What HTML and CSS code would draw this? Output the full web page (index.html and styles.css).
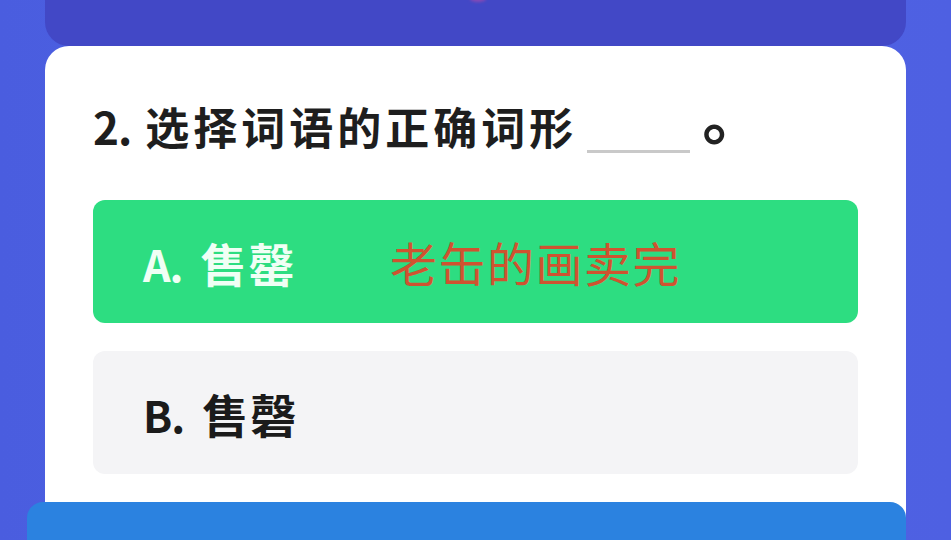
FILE: index.html
```html
<!DOCTYPE html>
<html lang="zh">
<head>
<meta charset="utf-8">
<link rel="stylesheet" href="styles.css">
</head>
<body>
<div class="page">
  <div class="topband"><span class="glow"></span></div>
  <div class="card">
    <div class="question"><span class="num">2.</span><span class="qtext">选择词语的正确词形</span><span class="blank"></span><span class="stop">。</span></div>
    <div class="option correct">
      <span class="label"><span class="letter">A.</span>售罄</span>
      <span class="note">老缶的画卖完</span>
    </div>
    <div class="option">
      <span class="label"><span class="letter">B.</span>售磬</span>
    </div>
  </div>
  <div class="bottombar"></div>
</div>
</body>
</html>
```

FILE: styles.css
```css
html, body {
  margin: 0;
  padding: 0;
  width: 951px;
  height: 540px;
  overflow: hidden;
}
body {
  background: linear-gradient(90deg, #4a5ddf 0%, #4f64e4 50%, #4e60e2 100%);
  font-family: "Noto Sans CJK SC", "Noto Sans", sans-serif;
}
.page {
  position: relative;
  width: 951px;
  height: 540px;
  padding: 0 45px;
  box-sizing: border-box;
}
.topband {
  position: relative;
  height: 46px;
  background: #4248c6;
  border-radius: 0 0 24px 24px;
}
.glow {
  position: absolute;
  left: 425px;
  top: -4px;
  width: 16px;
  height: 6px;
  border-radius: 50%;
  background: #9a4ab0;
  opacity: 0.8;
  filter: blur(1.5px);
}
.card {
  background: #ffffff;
  border-radius: 24px 24px 0 0;
  height: 520px;
  padding: 52px 48px 0 48px;
  box-sizing: border-box;
}
.question {
  display: flex;
  align-items: flex-end;
  font-size: 44px;
  font-weight: 700;
  color: #1e1e1e;
  line-height: 56px;
  height: 56px;
}
.num {
  margin-right: 14px;
  letter-spacing: -1px;
}
.qtext {
  letter-spacing: 4px;
}
.blank {
  display: inline-block;
  width: 103px;
  height: 3px;
  background: #c9c9c9;
  margin: 0 0 1px 10px;
}
.stop {
  font-size: 62px;
  line-height: 62px;
  font-weight: 700;
  margin-left: 12px;
  margin-bottom: 10px;
  color: #222;
}
.option {
  display: flex;
  align-items: center;
  height: 123px;
  border-radius: 12px;
  background: #f4f4f6;
  padding-left: 50px;
  box-sizing: border-box;
}
.option + .option {
  margin-top: 28px;
}
.question + .option {
  margin-top: 46px;
}
.option.correct {
  background: #2ddd81;
}
.label {
  font-size: 46px;
  font-weight: 700;
  color: #1b1b1b;
  width: 247px;
  letter-spacing: 2px;
}
.letter {
  font-size: 43px;
  letter-spacing: -1px;
  margin-right: 18px;
}
.correct .label {
  color: #f0fff5;
}
.note {
  font-size: 47px;
  font-weight: 400;
  color: #cf5330;
  letter-spacing: 1.5px;
}
.bottombar {
  position: absolute;
  left: 27px;
  top: 502px;
  width: 879px;
  height: 60px;
  background: #2b82e0;
  border-radius: 16px;
}
```
